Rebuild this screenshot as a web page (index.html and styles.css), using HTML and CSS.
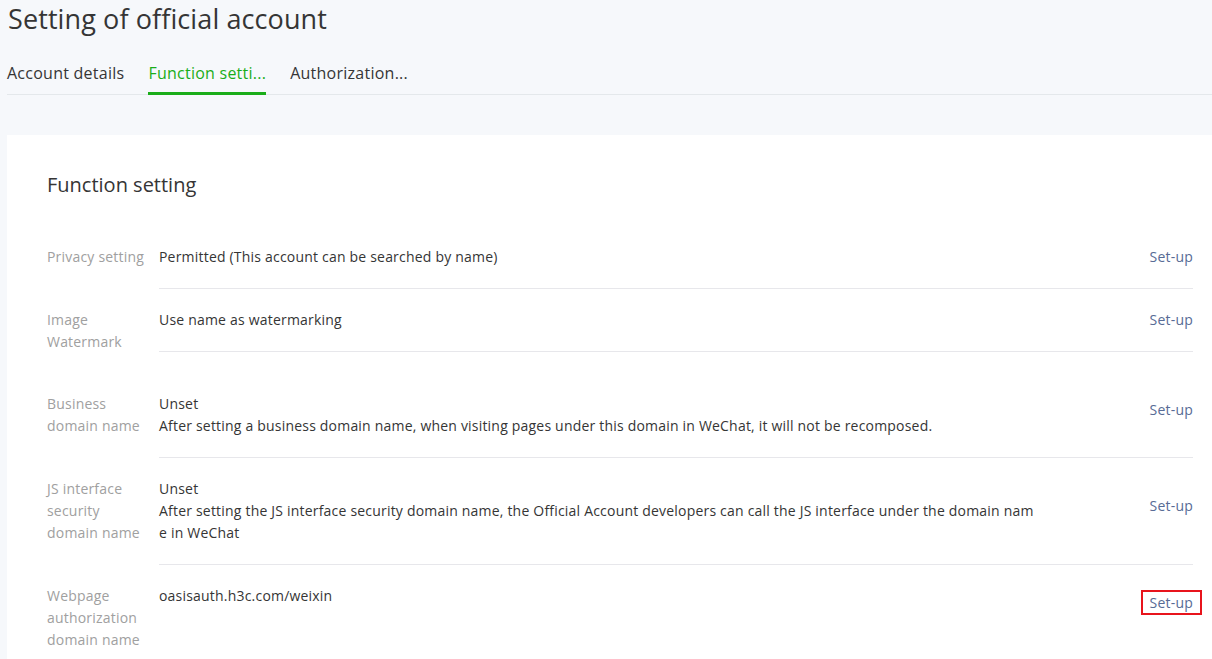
FILE: index.html
```html
<!DOCTYPE html>
<html lang="en">
<head>
    <meta charset="UTF-8">
    <meta name="viewport" content="width=device-width, initial-scale=1.0">
    <title>Setting of official account</title>
    <link rel="stylesheet" href="styles.css">
</head>
<body>
    <div class="page">
        <h1 class="page-title">Setting of official account</h1>
        <div class="tabs">
            <a class="tab" href="#">Account details</a>
            <a class="tab is-active" href="#">Function setti...</a>
            <a class="tab" href="#">Authorization...</a>
        </div>

        <div class="card">
            <h2 class="card-title">Function setting</h2>

            <div class="row">
                <div class="row-label">Privacy setting</div>
                <div class="row-main">
                    <div class="row-info">Permitted (This account can be searched by name)</div>
                    <div class="row-action"><a href="#">Set-up</a></div>
                </div>
            </div>

            <div class="row">
                <div class="row-label">Image Watermark</div>
                <div class="row-main">
                    <div class="row-info">Use name as watermarking</div>
                    <div class="row-action"><a href="#">Set-up</a></div>
                </div>
            </div>

            <div class="row row--desc">
                <div class="row-label">Business domain name</div>
                <div class="row-main">
                    <div class="row-info">
                        <div>Unset</div>
                        <div>After setting a business domain name, when visiting pages under this domain in WeChat, it will not be recomposed.</div>
                    </div>
                    <div class="row-action"><a href="#">Set-up</a></div>
                </div>
            </div>

            <div class="row row--desc">
                <div class="row-label">JS interface security domain name</div>
                <div class="row-main">
                    <div class="row-info">
                        <div>Unset</div>
                        <div>After setting the JS interface security domain name, the Official Account developers can call the JS interface under the domain name in WeChat</div>
                    </div>
                    <div class="row-action"><a href="#">Set-up</a></div>
                </div>
            </div>

            <div class="row row--low">
                <div class="row-label">Webpage authorization domain name</div>
                <div class="row-main">
                    <div class="row-info">oasisauth.h3c.com/weixin</div>
                    <div class="row-action"><a class="is-marked" href="#">Set-up</a></div>
                </div>
            </div>
        </div>
    </div>
</body>
</html>
```

FILE: styles.css
```css
html, body { margin: 0; overflow: hidden; }
body { font-family: "Open Sans", "Noto Sans", sans-serif; background: #f6f8fb; color: #353535; }
a { text-decoration: none; }

.page { width: 1226px; padding-left: 7px; }
.page-title { margin: 0; padding-left: 1px; font-size: 27px; font-weight: normal; line-height: 38px; letter-spacing: 0.1px; color: #353535; }

.tabs { display: flex; gap: 24px; margin-top: 24px; border-bottom: 1px solid #e4e8eb; }
.tab { font-size: 16px; line-height: 22px; letter-spacing: 0.25px; padding-bottom: 8px; border-bottom: 3px solid transparent; margin-bottom: -1px; color: #353535; }
.tab.is-active { color: #1aad19; border-bottom-color: #1aad19; }

.card { margin-top: 40px; background: #fff; padding: 36px 40px 0; }
.card-title { margin: 0 0 27px; font-size: 20px; font-weight: normal; line-height: 28px; color: #353535; }

.row { display: flex; align-items: flex-start; font-size: 14px; line-height: 22px; letter-spacing: 0.2px; }
.row-label { width: 100px; flex: none; padding: 20px 12px 20px 0; color: #a0a0a0; }
.row-main { flex: 1; display: flex; align-items: center; padding: 20px 0; border-bottom: 1px solid #e7e7eb; }
.row:last-child .row-main { border-bottom: none; }
.row-info { flex: 1; max-width: 880px; word-break: break-all; }
.row-action { margin-left: auto; }
.row-action a { color: #576b95; }
.row--desc .row-action { margin-bottom: 10px; }
.row--low .row-info { align-self: flex-start; }
.row--low .row-action { align-self: flex-start; margin-top: 7px; }

/* highlighted link */
.row-action a.is-marked { display: inline-block; line-height: 21px; padding: 0 7px; margin: 0 -7px; outline: 2px solid #e8141c; }
```
